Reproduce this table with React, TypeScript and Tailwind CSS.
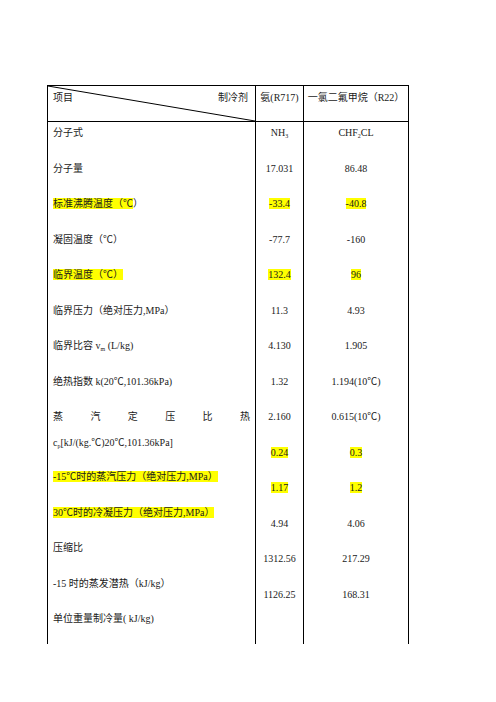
import React from 'react';

const font = "font-['Liberation_Serif','Noto_Sans_CJK_SC',serif]";

function Hl({ children }: { children: React.ReactNode }) {
  return <span className="bg-[#ffff00]">{children}</span>;
}

const labels: React.ReactNode[] = [
  '分子式',
  '分子量',
  <><Hl>标准沸腾温度（℃</Hl>）</>,
  '凝固温度（℃）',
  <Hl>临界温度（℃）</Hl>,
  '临界压力（绝对压力,MPa）',
  <>临界比容 v<sub className="text-[6px]">m</sub> (L/kg)</>,
  '绝热指数 k(20℃,101.36kPa)',
];

const tailLabels: React.ReactNode[] = [
  <Hl>-15℃时的蒸汽压力（绝对压力,MPa）</Hl>,
  <Hl>30℃时的冷凝压力（绝对压力,MPa）</Hl>,
  '压缩比',
  '-15 时的蒸发潜热（kJ/kg）',
  '单位重量制冷量( kJ/kg)',
];

const nh3: React.ReactNode[] = [
  <>NH<sub className="text-[6px]">3</sub></>,
  '17.031',
  <Hl>-33.4</Hl>,
  '-77.7',
  <Hl>132.4</Hl>,
  '11.3',
  '4.130',
  '1.32',
  '2.160',
  <Hl>0.24</Hl>,
  <Hl>1.17</Hl>,
  '4.94',
  '1312.56',
  '1126.25',
];

const r22: React.ReactNode[] = [
  <>CHF<sub className="text-[6px]">2</sub>CL</>,
  '86.48',
  <Hl>-40.8</Hl>,
  '-160',
  <Hl>96</Hl>,
  '4.93',
  '1.905',
  '1.194(10℃)',
  '0.615(10℃)',
  <Hl>0.3</Hl>,
  <Hl>1.2</Hl>,
  '4.06',
  '217.29',
  '168.31',
];

function ValueColumn({ values }: { values: React.ReactNode[] }) {
  return (
    <div className="h-[522px] border-l border-black pt-[5px] text-center">
      {values.map((v, i) => (
        <div key={i} className="h-[35.5px] leading-[12px] whitespace-nowrap">
          {v}
        </div>
      ))}
    </div>
  );
}

export default function App() {
  return (
    <div className={`min-h-screen bg-white pt-[85px] pl-[47px] text-[10px] text-[#1a1a1a] ${font}`}>
      <div className="w-[362px] border-l border-r border-t border-black">
        <div className="grid grid-cols-[207px_48px_1fr]">
          {/* header */}
          <div className="relative h-[36px] border-b border-black flex justify-between items-start pt-[6px] pl-[5px] pr-[7px] leading-[12px]">
            <svg className="absolute inset-0 w-full h-full" preserveAspectRatio="none" viewBox="0 0 100 100">
              <line x1="0" y1="0" x2="100" y2="100" stroke="black" strokeWidth="1" vectorEffect="non-scaling-stroke" />
            </svg>
            <span>项目</span>
            <span>制冷剂</span>
          </div>
          <div className="h-[36px] border-b border-l border-black pt-[6px] text-center leading-[12px] whitespace-nowrap">
            氨(R717)
          </div>
          <div className="h-[36px] border-b border-l border-black pt-[6px] text-center leading-[12px] whitespace-nowrap">
            一氯二氟甲烷（R22）
          </div>

          {/* body */}
          <div className="h-[522px] pt-[5px] pl-[5px] pr-[5px]">
            {labels.map((l, i) => (
              <div key={i} className="h-[35.5px] leading-[12px] whitespace-nowrap">
                {l}
              </div>
            ))}
            <div className="h-[60px] leading-[12px]">
              <div className="flex justify-between">
                <span>蒸</span>
                <span>汽</span>
                <span>定</span>
                <span>压</span>
                <span>比</span>
                <span>热</span>
              </div>
              <div className="mt-[14px] whitespace-nowrap">
                c<sub className="text-[6px]">p</sub>[kJ/(kg.℃)20℃,101.36kPa]
              </div>
            </div>
            {tailLabels.map((l, i) => (
              <div key={i} className="h-[35.5px] leading-[12px] whitespace-nowrap">
                {l}
              </div>
            ))}
          </div>
          <ValueColumn values={nh3} />
          <ValueColumn values={r22} />
        </div>
      </div>
    </div>
  );
}
